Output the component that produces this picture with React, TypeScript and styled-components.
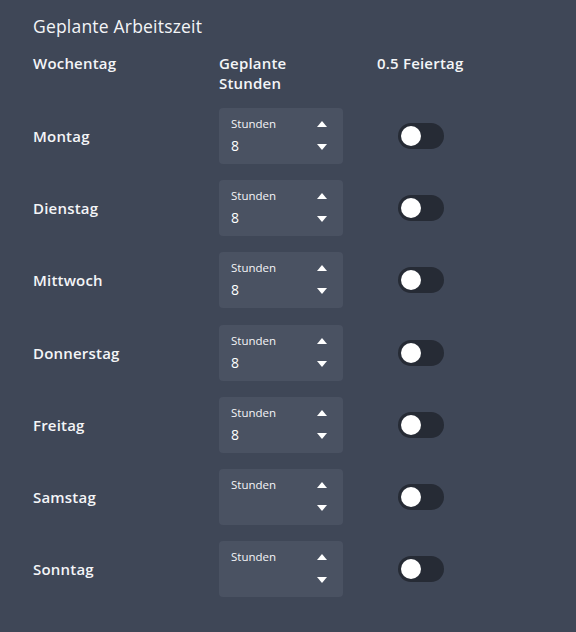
import React, { useState } from 'react';
import styled, { createGlobalStyle } from 'styled-components';

const GlobalStyle = createGlobalStyle`
  html, body {
    margin: 0;
    padding: 0;
    background-color: #3f4757;
  }
  body {
    font-family: 'Open Sans', 'Noto Sans', sans-serif;
    color: #f4f5f7;
  }
`

const Page = styled.main`
  width: 576px;
  min-height: 632px;
  box-sizing: border-box;
  padding: 14px 33px 0;
  background-color: #3f4757;
`

const Title = styled.h2`
  margin: 0;
  font-size: 17.5px;
  line-height: 24px;
  font-weight: 400;
  letter-spacing: 0.2px;
  color: #f4f5f7;
`

const Table = styled.div`
  display: grid;
  grid-template-columns: 186px 158px 88px;
  margin-top: 15px;
`

const HeadCell = styled.div`
  font-size: 15px;
  line-height: 20px;
  font-weight: 600;
  letter-spacing: 0.2px;
  color: #f4f5f7;
  padding-bottom: 15px;
  white-space: nowrap;
`

const DayLabel = styled.div`
  display: flex;
  align-items: center;
  height: 56px;
  font-size: 15px;
  font-weight: 600;
  letter-spacing: 0.2px;
  margin-bottom: 16.2px;
`

const Cell = styled.div<{ $center?: boolean }>`
  display: flex;
  align-items: center;
  justify-content: ${p => (p.$center ? 'center' : 'flex-start')};
  height: 56px;
  margin-bottom: 16.2px;
`

const NumberBox = styled.div`
  position: relative;
  width: 124px;
  height: 56px;
  box-sizing: border-box;
  padding: 9px 12px 0;
  background-color: #4a5262;
  border-radius: 4px;
`

const BoxLabel = styled.div`
  font-size: 11.5px;
  line-height: 14px;
  font-weight: 500;
  color: #f4f5f7;
`

const BoxValue = styled.div`
  margin-top: 6px;
  font-size: 14px;
  line-height: 18px;
  font-weight: 500;
  color: #ffffff;
  min-height: 18px;
`

const Spinner = styled.div`
  position: absolute;
  right: 16px;
  top: 13px;
  display: flex;
  flex-direction: column;
  gap: 17px;
`

const Arrow = styled.span<{ $down?: boolean }>`
  display: block;
  width: 0;
  height: 0;
  border-left: 5px solid transparent;
  border-right: 5px solid transparent;
  ${p => (p.$down
    ? 'border-top: 6px solid #ffffff;'
    : 'border-bottom: 6px solid #ffffff;')}
`

const Track = styled.button<{ $on: boolean }>`
  position: relative;
  width: 46px;
  height: 26px;
  padding: 0;
  border: 0;
  border-radius: 13px;
  background-color: ${p => (p.$on ? '#6a9cf0' : '#262b35')};
  cursor: pointer;
`

const Knob = styled.span<{ $on: boolean }>`
  position: absolute;
  top: 3px;
  left: ${p => (p.$on ? '23px' : '3px')};
  width: 20px;
  height: 20px;
  border-radius: 50%;
  background-color: #ffffff;
  transition: left 0.2s;
`

const days = [
  { name: 'Montag', hours: '8' },
  { name: 'Dienstag', hours: '8' },
  { name: 'Mittwoch', hours: '8' },
  { name: 'Donnerstag', hours: '8' },
  { name: 'Freitag', hours: '8' },
  { name: 'Samstag', hours: '' },
  { name: 'Sonntag', hours: '' },
]

const App: React.FC = () => {
  const [halfDay, setHalfDay] = useState<boolean[]>(days.map(() => false))

  const toggle = (i: number) => {
    setHalfDay(halfDay.map((v, idx) => (idx === i ? !v : v)))
  }

  return (
    <Page>
      <GlobalStyle />
      <Title>Geplante Arbeitszeit</Title>
      <Table>
        <HeadCell>Wochentag</HeadCell>
        <HeadCell>Geplante<br />Stunden</HeadCell>
        <HeadCell>0.5 Feiertag</HeadCell>
        {days.map((d, i) => (
          <React.Fragment key={d.name}>
            <DayLabel>{d.name}</DayLabel>
            <Cell>
              <NumberBox>
                <BoxLabel>Stunden</BoxLabel>
                <BoxValue>{d.hours}</BoxValue>
                <Spinner>
                  <Arrow />
                  <Arrow $down />
                </Spinner>
              </NumberBox>
            </Cell>
            <Cell $center>
              <Track $on={halfDay[i]} onClick={() => toggle(i)}>
                <Knob $on={halfDay[i]} />
              </Track>
            </Cell>
          </React.Fragment>
        ))}
      </Table>
    </Page>
  );
}

export default App;
